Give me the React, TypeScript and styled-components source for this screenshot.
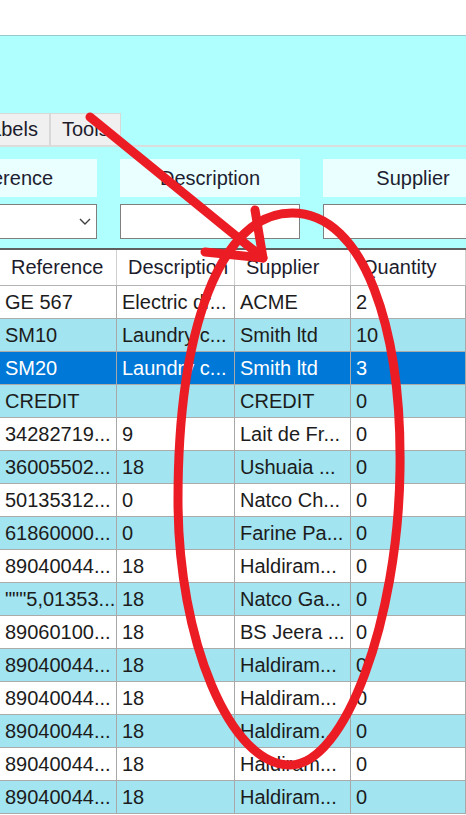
import React from 'react'
import styled, { createGlobalStyle } from 'styled-components'

const GlobalStyle = createGlobalStyle`
  html, body {
    margin: 0;
    padding: 0;
    background: #ffffff;
    overflow: hidden;
  }
  body {
    font-family: 'Liberation Sans', Arial, sans-serif;
    font-size: 20px;
    color: #1c1c1c;
  }
`

const Page = styled.div`
  position: relative;
  width: 466px;
  height: 815px;
  overflow: hidden;
`

const TopBar = styled.div`
  height: 35px;
  background: #ffffff;
  border-bottom: 1px solid #97caca;
`

const FormArea = styled.div`
  background: #b0ffff;
  padding-top: 77px;
`

const TabStrip = styled.div`
  display: flex;
  margin-left: -33px;
  border-bottom: 2px solid #dcdcdc;
`

const Tab = styled.div`
  height: 31px;
  display: flex;
  align-items: center;
  padding: 0 11px;
  background: #f0f0f0;
  border: 1px solid #d9d9d9;
  border-bottom: none;
  color: #1c1c2c;
`

const TabPage = styled.div`
  padding: 12px 0 9px 0;
`

const FilterRow = styled.div`
  display: grid;
  grid-template-columns: 180px 180px 180px;
  column-gap: 23px;
  margin-left: -83px;
`

const FilterCol = styled.div`
  display: flex;
  flex-direction: column;
  gap: 7px;
`

const FilterLabel = styled.div`
  height: 38px;
  display: flex;
  align-items: center;
  justify-content: center;
  background: #eaffff;
  color: #1e1e30;
`

const FilterInput = styled.div`
  height: 35px;
  box-sizing: border-box;
  background: #ffffff;
  border: 1px solid #7f7f7f;
  display: flex;
  align-items: center;
  justify-content: flex-end;
  padding-right: 5px;
`

const Grid = styled.div`
  border-top: 2px solid #5f5f5f;
  background: #ffffff;
`

const Row = styled.div<{ $bg: string; $fg: string }>`
  display: grid;
  grid-template-columns: 117px 118px 116px 1fr;
  height: 33px;
  box-sizing: border-box;
  border-bottom: 1px solid #ababab;
  background: ${({ $bg }) => $bg};
  color: ${({ $fg }) => $fg};
`

const HeaderRow = styled(Row)`
  height: 36px;
  border-bottom-color: #b4b4b4;
`

const Cell = styled.div<{ $head?: boolean }>`
  display: flex;
  align-items: center;
  padding-left: ${({ $head }) => ($head ? '11px' : '5px')};
  border-right: 1px solid ${({ $head }) => ($head ? '#d0d0d0' : '#a8a8a8')};
  white-space: nowrap;
  overflow: hidden;
`

const Overlay = styled.svg`
  position: absolute;
  left: 0;
  top: 0;
  pointer-events: none;
`

const rows: string[][] = [
  ['GE 567', 'Electric dr...', 'ACME', '2'],
  ['SM10', 'Laundry c...', 'Smith ltd', '10'],
  ['SM20', 'Laundry c...', 'Smith ltd', '3'],
  ['CREDIT', '', 'CREDIT', '0'],
  ['34282719...', '9', 'Lait de Fr...', '0'],
  ['36005502...', '18', 'Ushuaia ...', '0'],
  ['50135312...', '0', 'Natco Ch...', '0'],
  ['61860000...', '0', 'Farine Pa...', '0'],
  ['89040044...', '18', 'Haldiram...', '0'],
  ['"""5,01353...', '18', 'Natco Ga...', '0'],
  ['89060100...', '18', 'BS Jeera ...', '0'],
  ['89040044...', '18', 'Haldiram...', '0'],
  ['89040044...', '18', 'Haldiram...', '0'],
  ['89040044...', '18', 'Haldiram...', '0'],
  ['89040044...', '18', 'Haldiram...', '0'],
  ['89040044...', '18', 'Haldiram...', '0'],
]

const SELECTED = 2

function rowColors(i: number) {
  if (i === SELECTED) return { bg: '#0078d7', fg: '#ffffff' }
  return i % 2 === 1 ? { bg: '#a2e4f0', fg: '#1c1c1c' } : { bg: '#ffffff', fg: '#1c1c1c' }
}

export default function App() {
  return (
    <Page>
      <GlobalStyle />
      <TopBar />
      <FormArea>
        <TabStrip>
          <Tab>Labels</Tab>
          <Tab>Tools</Tab>
        </TabStrip>
        <TabPage>
          <FilterRow>
            <FilterCol>
              <FilterLabel>Reference</FilterLabel>
              <FilterInput>
                <svg width="12" height="8" viewBox="0 0 12 8">
                  <polyline points="1,1 6,6 11,1" fill="none" stroke="#404040" strokeWidth="1.4" />
                </svg>
              </FilterInput>
            </FilterCol>
            <FilterCol>
              <FilterLabel>Description</FilterLabel>
              <FilterInput />
            </FilterCol>
            <FilterCol>
              <FilterLabel>Supplier</FilterLabel>
              <FilterInput />
            </FilterCol>
          </FilterRow>
        </TabPage>
      </FormArea>
      <Grid>
        <HeaderRow $bg="#ffffff" $fg="#1c1c2c">
          <Cell $head>Reference</Cell>
          <Cell $head>Description</Cell>
          <Cell $head>Supplier</Cell>
          <Cell $head>Quantity</Cell>
        </HeaderRow>
        {rows.map((r, i) => {
          const c = rowColors(i)
          return (
            <Row key={i} $bg={c.bg} $fg={c.fg}>
              {r.map((v, j) => (
                <Cell key={j}>{v}</Cell>
              ))}
            </Row>
          )
        })}
      </Grid>

      {/* red annotation drawn over the screenshot */}
      <Overlay width="466" height="815" viewBox="0 0 466 815">
        <g fill="none" stroke="#ec1c24" strokeWidth="9" strokeLinecap="round" strokeLinejoin="round">
          <path d="M90 117 L263 258" />
          <path d="M255 210 L263 258 L205 252" />
          <path d="M292 213 C 365 213, 402 330, 400 470 C 398 620, 345 765, 290 765 C 230 765, 178 640, 178 500 C 178 330, 220 213, 292 213 Z" />
        </g>
      </Overlay>
    </Page>
  )
}
